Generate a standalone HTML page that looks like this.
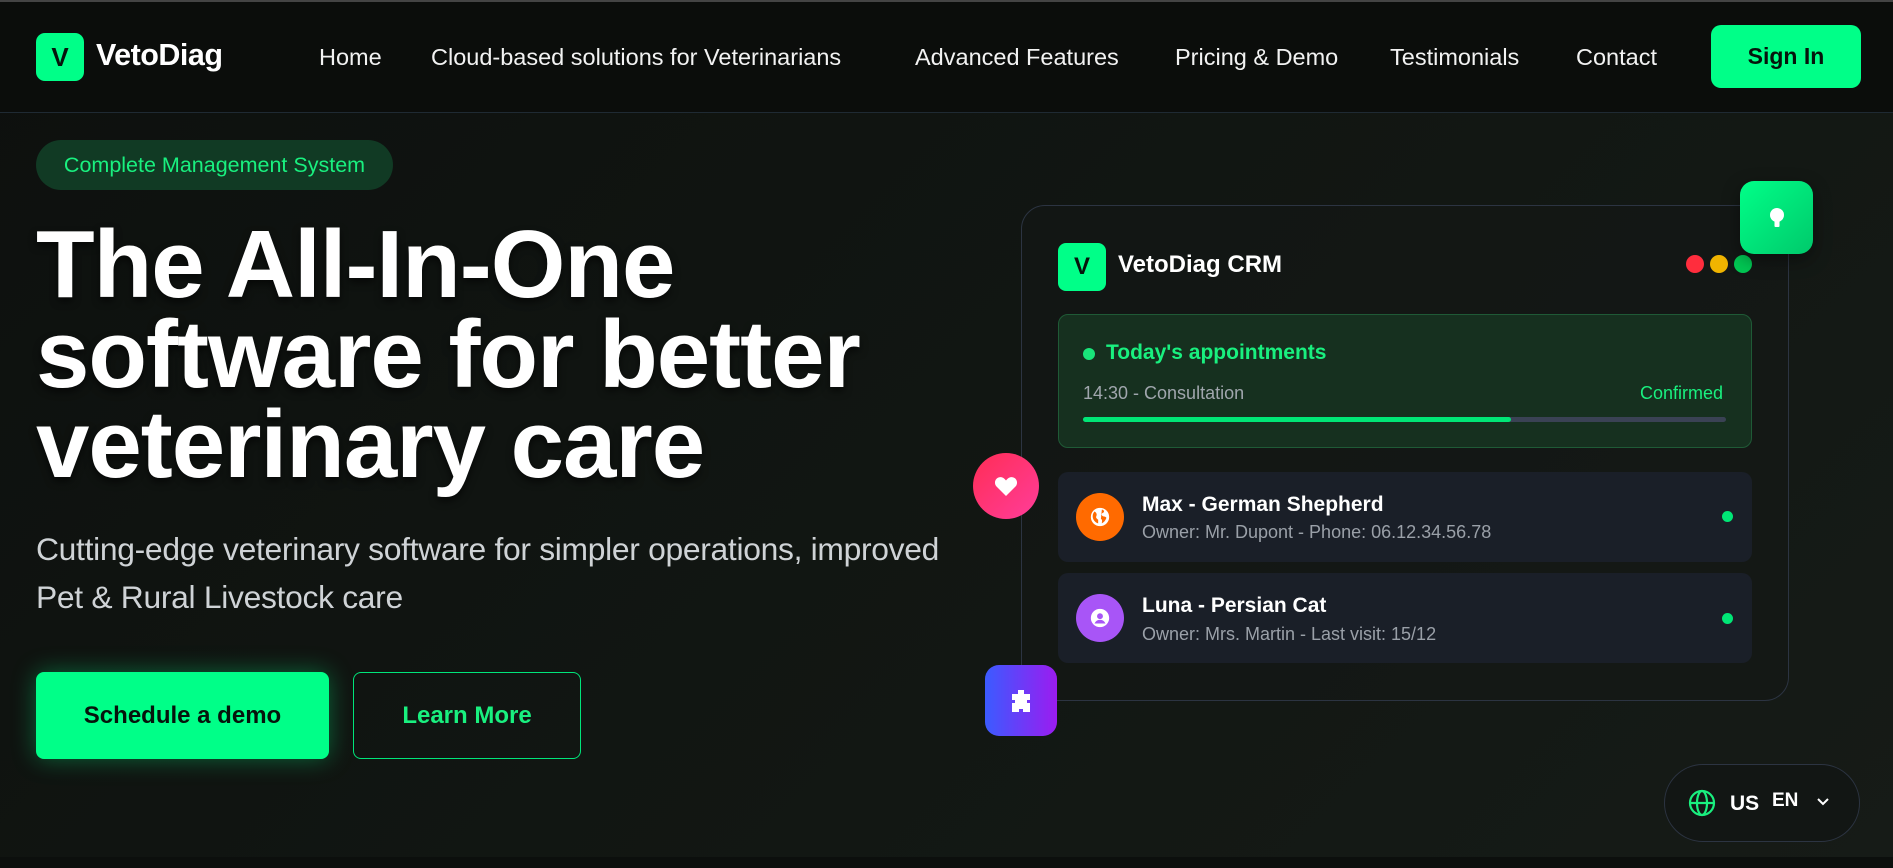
<!DOCTYPE html>
<html><head><meta charset="utf-8"><style>
*{margin:0;padding:0;box-sizing:border-box}
body{width:1893px;height:868px;overflow:hidden;font-family:"Liberation Sans",sans-serif;background:linear-gradient(135deg,#0d100e 0%,#121713 60%,#161b17 100%);color:#fff;position:relative}
.abs{position:absolute}
.nav{left:0;top:0;width:1893px;height:113px;background:#0b0d0b;border-top:2px solid #444;border-bottom:1px solid #1f2a33}
.logo{left:36px;top:33px;width:48px;height:48px;background:#00ff88;border-radius:9px;color:#06140c;font-weight:bold;font-size:26px;display:flex;align-items:center;justify-content:center}
.brand{left:96px;top:38px;font-size:30.5px;font-weight:bold;letter-spacing:-0.5px}
.nl{top:44px;font-size:23.5px;color:#f2f2f2}
.signin{left:1711px;top:25px;width:150px;height:63px;background:#00ff88;border-radius:10px;color:#06140c;font-weight:bold;font-size:23px;display:flex;align-items:center;justify-content:center}
.badge{left:36px;top:140px;width:357px;height:50px;border-radius:25px;background:#113a24;color:#19f07f;font-size:21.5px;display:flex;align-items:center;justify-content:center}
h1{position:absolute;left:36px;top:220px;font-size:96px;line-height:90px;font-weight:bold;letter-spacing:-1px;text-shadow:0 4px 8px rgba(0,0,0,.6)}
.sub{left:36px;top:525px;font-size:31.8px;line-height:48px;color:#cfd3d6;width:1000px;letter-spacing:-0.3px}
.b1{left:36px;top:672px;width:293px;height:87px;background:#00ff88;border-radius:8px;color:#06140c;font-weight:bold;font-size:24px;display:flex;align-items:center;justify-content:center;box-shadow:0 0 24px rgba(0,255,136,.35)}
.b2{left:353px;top:672px;width:228px;height:87px;border:1.5px solid #00e57a;border-radius:8px;color:#19f07f;font-weight:bold;font-size:24px;display:flex;align-items:center;justify-content:center}
.card{left:1021px;top:205px;width:768px;height:496px;border:1.5px solid #2c3442;border-radius:24px;background:rgba(20,24,22,.6)}
.clogo{left:1058px;top:243px;width:48px;height:48px;background:#00ff88;border-radius:8px;color:#06140c;font-weight:bold;font-size:24px;display:flex;align-items:center;justify-content:center}
.ctitle{left:1118px;top:251px;font-size:24px;font-weight:bold}
.dot{width:18px;height:18px;border-radius:50%;top:255px}
.appt{left:1058px;top:314px;width:694px;height:134px;background:#16301f;border:1px solid #1f5a36;border-radius:10px}
.row{left:1058px;width:694px;height:90px;background:#1a1f28;border-radius:10px}
.ic{left:1076px;width:48px;height:48px;border-radius:50%;display:flex;align-items:center;justify-content:center}
.rt{left:1142px;font-size:21px;font-weight:bold}
.rs{left:1142px;font-size:18px;color:#9aa0a8}
.gd{left:1722px;width:11px;height:11px;border-radius:50%;background:#00e676}
</style></head><body>
<div class="abs nav"></div>
<div class="abs logo">V</div>
<div class="abs brand">VetoDiag</div>
<div class="abs nl" style="left:319px">Home</div>
<div class="abs nl" style="left:431px">Cloud-based solutions for Veterinarians</div>
<div class="abs nl" style="left:915px">Advanced Features</div>
<div class="abs nl" style="left:1175px">Pricing &amp; Demo</div>
<div class="abs nl" style="left:1390px">Testimonials</div>
<div class="abs nl" style="left:1576px">Contact</div>
<div class="abs signin">Sign In</div>

<div class="abs badge">Complete Management System</div>
<h1>The All-In-One<br>software for better<br>veterinary care</h1>
<div class="abs sub">Cutting-edge veterinary software for simpler operations, improved<br>Pet &amp; Rural Livestock care</div>
<div class="abs b1">Schedule a demo</div>
<div class="abs b2">Learn More</div>

<div class="abs card"></div>
<div class="abs clogo">V</div>
<div class="abs ctitle">VetoDiag CRM</div>
<div class="abs dot" style="left:1686px;background:#ff2d3d"></div>
<div class="abs dot" style="left:1710px;background:#f0b400"></div>
<div class="abs dot" style="left:1734px;background:#00c853"></div>

<div class="abs appt"></div>
<div class="abs" style="left:1083px;top:348px;width:12px;height:12px;border-radius:50%;background:#19e57a"></div>
<div class="abs" style="left:1106px;top:341px;font-size:21px;font-weight:bold;color:#19f07f">Today's appointments</div>
<div class="abs" style="left:1083px;top:383px;font-size:18px;color:#a0a6ad">14:30 - Consultation</div>
<div class="abs" style="left:1640px;top:383px;font-size:18px;color:#19f07f">Confirmed</div>
<div class="abs" style="left:1083px;top:417px;width:643px;height:5px;border-radius:3px;background:#3a4254"></div>
<div class="abs" style="left:1083px;top:417px;width:428px;height:5px;border-radius:3px;background:#00e676"></div>

<div class="abs row" style="top:472px"></div>
<div class="abs ic" style="top:493px;background:#ff6a00"><svg width="22" height="22" viewBox="0 0 24 24"><circle cx="12" cy="12" r="10" fill="#fff"/><path d="M6 6c2 1 3 3 2 5 -1 2 1 3 2 4v4c-3-1-6-4-6-8 0-2 1-4 2-5zM14 4c2 0 3 2 2 3-1 1-3 1-2 3 1 2 4 1 5 3-1 3-3 5-5 6 0-2 1-4-1-5" fill="#ff6a00"/></svg></div>
<div class="abs rt" style="top:493px">Max - German Shepherd</div>
<div class="abs rs" style="top:522px">Owner: Mr. Dupont - Phone: 06.12.34.56.78</div>
<div class="abs gd" style="top:511px"></div>

<div class="abs row" style="top:573px"></div>
<div class="abs ic" style="top:594px;background:#a855f7"><svg width="22" height="22" viewBox="0 0 24 24"><circle cx="12" cy="12" r="10" fill="#fff"/><circle cx="12" cy="10" r="3.2" fill="#a855f7"/><path d="M6 18c1.5-3 3.5-4 6-4s4.5 1 6 4" fill="#a855f7"/></svg></div>
<div class="abs rt" style="top:594px">Luna - Persian Cat</div>
<div class="abs rs" style="top:624px">Owner: Mrs. Martin - Last visit: 15/12</div>
<div class="abs gd" style="top:613px"></div>

<div class="abs" style="left:1740px;top:181px;width:73px;height:73px;border-radius:14px;background:linear-gradient(135deg,#00ff88,#00c96b);display:flex;align-items:center;justify-content:center;box-shadow:0 6px 18px rgba(0,0,0,.4)"><svg width="20" height="24" viewBox="0 0 20 24"><circle cx="10" cy="9" r="7" fill="#fff"/><rect x="7.5" y="14" width="5" height="7" rx="1" fill="#fff"/></svg></div>
<div class="abs" style="left:973px;top:453px;width:66px;height:66px;border-radius:50%;background:linear-gradient(135deg,#ff2d55,#ff3d9a);display:flex;align-items:center;justify-content:center"><svg width="24" height="22" viewBox="0 0 24 22"><path d="M12 21L2.5 11.5C0 9 0.5 4 4.5 2.5 7.5 1.5 10 3 12 5.5 14 3 16.5 1.5 19.5 2.5 23.5 4 24 9 21.5 11.5Z" fill="#fff"/></svg></div>
<div class="abs" style="left:985px;top:665px;width:72px;height:71px;border-radius:14px;background:linear-gradient(90deg,#3b5bff,#9b1cf0);display:flex;align-items:center;justify-content:center"><svg width="24" height="26" viewBox="0 0 24 26"><path d="M9 2h6v4h6v6h-3v3h3v9h-7v-3h-4v3H3v-9h3v-3H3V6h6z" fill="#fff"/></svg></div>

<div class="abs" style="left:1664px;top:764px;width:196px;height:78px;border-radius:39px;border:1.5px solid #2c3442;background:#121614"></div>
<svg class="abs" style="left:1688px;top:789px" width="28" height="28" viewBox="0 0 28 28" fill="none" stroke="#19f07f" stroke-width="2.2"><circle cx="14" cy="14" r="12"/><ellipse cx="14" cy="14" rx="5" ry="12"/><path d="M2 14h24"/></svg>
<div class="abs" style="left:1730px;top:792px;font-size:21px;font-weight:bold">US</div>
<div class="abs" style="left:1772px;top:790px;font-size:19px;font-weight:bold">EN</div>
<svg class="abs" style="left:1816px;top:797px" width="14" height="10" viewBox="0 0 14 10" fill="none" stroke="#fff" stroke-width="2"><path d="M2 2l5 5 5-5"/></svg>
<div class="abs" style="left:0;top:857px;width:1893px;height:11px;background:#0c0f0d"></div>
</body></html>
